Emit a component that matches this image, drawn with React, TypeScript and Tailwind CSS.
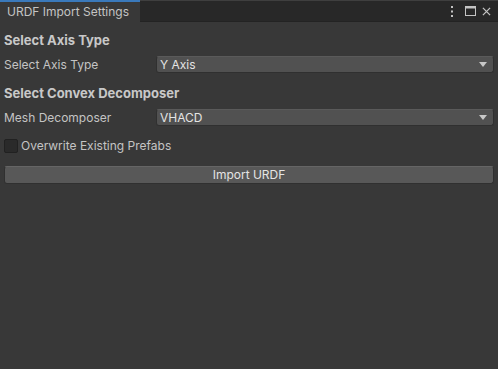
import React from "react";

const font = { fontFamily: "Inter, 'Noto Sans', sans-serif" };

function Dropdown({ value }: { value: string }) {
  return (
    <div className="flex-1 h-[17px] rounded-[3px] bg-[#515151] border border-[#303030] border-t-[#5a5a5a] flex items-center pl-[3px] pr-[6px] text-[12px] text-[#e4e4e4]">
      <span className="flex-1 leading-none">{value}</span>
      <svg width="8" height="5" viewBox="0 0 8 5">
        <path d="M0 0 H8 L4 5 Z" fill="#c8c8c8" />
      </svg>
    </div>
  );
}

export default function App() {
  return (
    <div className="w-[498px] h-[369px] bg-[#383838] flex flex-col" style={font}>
      <div className="h-[22px] bg-[#282828] flex items-stretch border-t border-[#3f3f3f]">
        <div className="w-[140px] bg-[#383838] border-t-2 border-[#3a79bb] -mt-px flex items-center pl-[7px] text-[12px] text-[#c4c4c4]">
          URDF Import Settings
        </div>
        <div className="flex-1 border-b border-[#232323]" />
        <div className="flex items-center pr-[7px] border-b border-[#232323]">
          <svg width="3" height="11" viewBox="0 0 3 11">
            <rect x="0" y="0" width="2" height="2" fill="#c4c4c4" />
            <rect x="0" y="4.5" width="2" height="2" fill="#c4c4c4" />
            <rect x="0" y="9" width="2" height="2" fill="#c4c4c4" />
          </svg>
          <svg width="11" height="10" viewBox="0 0 11 10" className="ml-[11px]">
            <rect x="0.5" y="0.5" width="10" height="9" fill="none" stroke="#c4c4c4" strokeWidth="1" />
            <rect x="0.5" y="0.5" width="10" height="2" fill="#c4c4c4" />
          </svg>
          <svg width="9" height="9" viewBox="0 0 10 10" className="ml-[6px]">
            <path d="M1 1 L9 9 M9 1 L1 9" stroke="#c4c4c4" strokeWidth="1.4" />
          </svg>
        </div>
      </div>
      <div className="flex flex-col pl-[4px] pr-[4px] text-[12px] text-[#c4c4c4]">
        <div className="h-[20px] mt-[9px] flex items-center font-bold text-[13px] text-[#c8c8c8]">Select Axis Type</div>
        <div className="h-[17px] mt-[5px] flex items-center">
          <div className="w-[152px]">Select Axis Type</div>
          <Dropdown value="Y Axis" />
        </div>
        <div className="h-[20px] mt-[11px] flex items-center font-bold text-[13px] text-[#c8c8c8]">Select Convex Decomposer</div>
        <div className="h-[17px] mt-[5px] flex items-center">
          <div className="w-[152px]">Mesh Decomposer</div>
          <Dropdown value="VHACD" />
        </div>
        <div className="h-[14px] mt-[13px] flex items-center">
          <div className="w-[14px] h-[14px] rounded-[2px] bg-[#2a2a2a] border border-[#212121]" />
          <span className="ml-[3px]">Overwrite Existing Prefabs</span>
        </div>
        <div className="h-[18px] mt-[13px] rounded-[3px] bg-[#585858] border border-[#303030] border-t-[#656565] flex items-center justify-center text-[#e4e4e4]">
          Import URDF
        </div>
      </div>
    </div>
  );
}
